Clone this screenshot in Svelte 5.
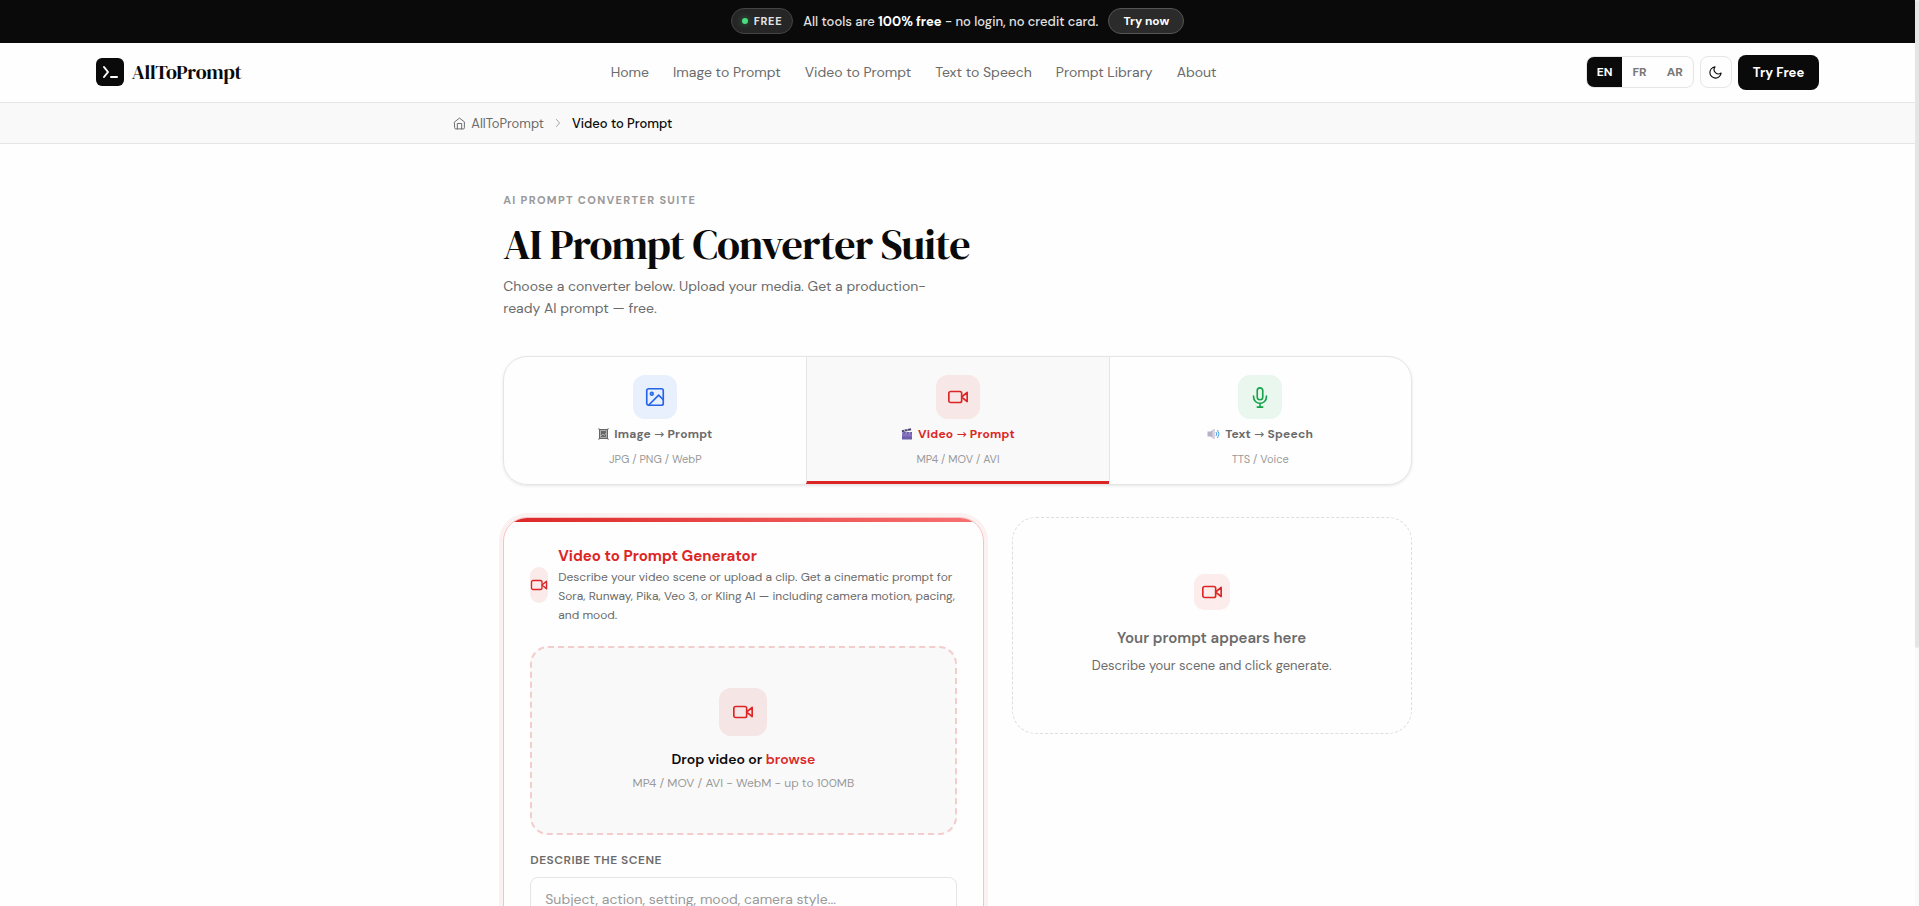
<script lang="ts">
	type Tab = { id: string; from: string; to: string; formats: string };

	const links = ['Home', 'Image to Prompt', 'Video to Prompt', 'Text to Speech', 'Prompt Library', 'About'];
	const languages = ['EN', 'FR', 'AR'];
	const tabs: Tab[] = [
		{ id: 'image', from: 'Image', to: 'Prompt', formats: 'JPG / PNG / WebP' },
		{ id: 'video', from: 'Video', to: 'Prompt', formats: 'MP4 / MOV / AVI' },
		{ id: 'speech', from: 'Text', to: 'Speech', formats: 'TTS / Voice' }
	];

	let language = $state('EN');
	let activeTab = $state('video');
	let scene = $state('');
	let fileInput: HTMLInputElement;

	let scrollTop = $state(0);
	let scrollHeight = $state(1266);
	let viewHeight = $state(906);
	let thumbHeight = $derived((viewHeight / scrollHeight) * 100);
	let thumbTop = $derived((scrollTop / scrollHeight) * 100);

	function onScroll(event: Event) {
		const el = event.currentTarget as HTMLElement;
		scrollTop = el.scrollTop;
	}
</script>

{#snippet videoIcon(size: number)}
	<svg class="icon" width={size} height={size} viewBox="0 0 24 24" aria-hidden="true">
		<rect x="2" y="6" width="14" height="12" rx="2" />
		<path d="M22 7l-6 5 6 5V7z" />
	</svg>
{/snippet}

<div class="page" bind:clientHeight={viewHeight} onscroll={onScroll}>
	<div class="content" bind:clientHeight={scrollHeight}>
		<div class="banner">
			<span class="free"><span class="dot"></span>FREE</span>
			<span>All tools are <strong>100% free</strong> - no login, no credit card.</span>
			<a class="try-now" href="#converter">Try now</a>
		</div>

		<header class="nav">
			<a class="logo" href="#home">
				<span class="logo-mark">
					<svg width="18" height="18" viewBox="0 0 18 18" aria-hidden="true">
						<path d="M3 4l4 5-4 5M10 14h6" />
					</svg>
				</span>
				AllToPrompt
			</a>
			<nav class="links">
				{#each links as link}
					<a href="#{link.toLowerCase().replaceAll(' ', '-')}">{link}</a>
				{/each}
			</nav>
			<div class="actions">
				<div class="languages">
					{#each languages as code}
						<button class:active={language === code} onclick={() => (language = code)}>{code}</button>
					{/each}
				</div>
				<button class="theme" aria-label="Toggle theme">
					<svg class="icon" width="15" height="15" viewBox="0 0 24 24" aria-hidden="true">
						<path d="M21 12.79A9 9 0 1 1 11.21 3 7 7 0 0 0 21 12.79z" />
					</svg>
				</button>
				<a class="try-free" href="#converter">Try Free</a>
			</div>
		</header>

		<div class="crumbs">
			<nav class="crumbs-inner" aria-label="Breadcrumb">
				<a href="#home">
					<svg class="icon" width="13" height="13" viewBox="0 0 24 24" aria-hidden="true">
						<path d="M3 9l9-7 9 7v11a2 2 0 0 1-2 2H5a2 2 0 0 1-2-2z" />
						<path d="M8 22V12h8v10" />
					</svg>
					AllToPrompt
				</a>
				<svg class="icon chevron" width="12" height="12" viewBox="0 0 24 24" aria-hidden="true">
					<path d="M9 5l6 7-6 7" />
				</svg>
				<span class="current">Video to Prompt</span>
			</nav>
		</div>

		<main id="converter">
			<p class="eyebrow">AI Prompt Converter Suite</p>
			<h1>AI Prompt Converter Suite</h1>
			<p class="intro">Choose a converter below. Upload your media. Get a production-ready AI prompt — free.</p>

			<div class="tabs" role="tablist">
				{#each tabs as tab}
					<button
						class="tab {tab.id}"
						class:active={activeTab === tab.id}
						role="tab"
						aria-selected={activeTab === tab.id}
						onclick={() => (activeTab = tab.id)}
					>
						<span class="tab-icon">
							{#if tab.id === 'image'}
								<svg class="icon" width="22" height="22" viewBox="0 0 24 24" aria-hidden="true">
									<rect x="3" y="3" width="18" height="18" rx="2" />
									<circle cx="8.5" cy="8.5" r="1.5" />
									<path d="M21 15l-5-5L5 21" />
								</svg>
							{:else if tab.id === 'video'}
								{@render videoIcon(22)}
							{:else}
								<svg class="icon" width="22" height="22" viewBox="0 0 24 24" aria-hidden="true">
									<path d="M12 2a3 3 0 0 0-3 3v7a3 3 0 0 0 6 0V5a3 3 0 0 0-3-3z" />
									<path d="M19 11v1a7 7 0 0 1-14 0v-1M12 19v4M9 23h6" />
								</svg>
							{/if}
						</span>
						<span class="tab-label">
							{#if tab.id === 'image'}
								<svg width="11" height="12" viewBox="0 0 11 12" aria-hidden="true">
									<path fill="#666" d="M0 0l2 1h7l2-1-1 2v8l1 2-2-1H2l-2 1 1-2V2z" />
									<path fill="none" stroke="#ccc" stroke-width=".7" d="M2.5 2.5h6v7h-6zM3 8l2-2 1.500 1.500L8 5" />
								</svg>
							{:else if tab.id === 'video'}
								<svg width="12" height="12" viewBox="0 0 12 12" aria-hidden="true">
									<path fill="#6b5fa8" d="M1 4h10v7.500H1z" />
									<path fill="#4a4470" d="M.8 2.200L9.800.3l.5 1.900L1 4.200z" />
									<path stroke="#d8d2ee" stroke-width=".9" d="M3 1.900l1 1.500M6 1.200l1 1.500M2 4.300L1.300 5.700M5.500 4.300l-.8 1.400M9 4.300l-.8 1.400" />
									<path fill="#8a6fc0" d="M1 6h10v2.500H1z" />
								</svg>
							{:else}
								<svg width="13" height="12" viewBox="0 0 13 12" aria-hidden="true">
									<path fill="#b9b2c6" d="M.5 3.500h3L7 1v10L3.500 8.500h-3z" />
									<path fill="#d9d4e2" d="M5.500 2L8 1v10l-2.500-1z" />
									<path fill="none" stroke="#4aa3e8" d="M9 4q1.500 2 0 4M10.500 2q3 4 0 8" />
								</svg>
							{/if}
							<span>{tab.from} <span class="arrow">→</span> {tab.to}</span>
						</span>
						<span class="tab-formats">{tab.formats}</span>
					</button>
				{/each}
			</div>

			<div class="workspace">
				<section class="card">
					<div class="card-head">
						<span class="head-icon">{@render videoIcon(18)}</span>
						<div>
							<h2>Video to Prompt Generator</h2>
							<p>
								Describe your video scene or upload a clip. Get a cinematic prompt for Sora, Runway, Pika, Veo 3, or
								Kling AI — including camera motion, pacing, and mood.
							</p>
						</div>
					</div>

					<button class="dropzone" onclick={() => fileInput.click()}>
						<span class="drop-icon">{@render videoIcon(22)}</span>
						<span class="drop-title">Drop video or <em>browse</em></span>
						<span class="drop-hint">MP4 / MOV / AVI - WebM - up to 100MB</span>
					</button>
					<input bind:this={fileInput} type="file" accept="video/*" aria-label="Video file" hidden />

					<label for="scene">Describe the scene</label>
					<textarea id="scene" rows="6" placeholder="Subject, action, setting, mood, camera style..." bind:value={scene}
					></textarea>
				</section>

				<section class="result">
					<span class="result-icon">{@render videoIcon(22)}</span>
					<h3>Your prompt appears here</h3>
					<p>Describe your scene and click generate.</p>
				</section>
			</div>
		</main>
	</div>
</div>

<div class="scrollbar" aria-hidden="true">
	<div class="thumb" style="top: {thumbTop}%; height: {thumbHeight}%"></div>
</div>

<style>
	:global(body) {
		background: #fefefe;
	}

	.page {
		--ink: #0a0a0a;
		--muted: #6b6b6b;
		--faint: #999;
		--line: #e5e5e5;
		--red: #dc2626;
		height: 100vh;
		padding-right: 4px;
		overflow-y: auto;
		scrollbar-width: none;
		font-family: 'DM Sans', Inter, 'Liberation Sans', sans-serif;
		font-size: 13px;
		color: var(--ink);
	}

	.page,
	.page * {
		box-sizing: border-box;
	}

	.scrollbar {
		position: fixed;
		inset: 0 0 0 auto;
		width: 4px;
		background: #fafafa;
	}

	.thumb {
		position: absolute;
		width: 100%;
		border-radius: 2px;
		background: #e5e5e5;
	}

	a {
		color: inherit;
		text-decoration: none;
	}

	button {
		font: inherit;
		color: inherit;
		border: 0;
		background: none;
		padding: 0;
		cursor: pointer;
	}

	h1,
	h2,
	h3,
	p {
		margin: 0;
	}

	.icon {
		fill: none;
		stroke: currentColor;
		stroke-width: 1.8;
		stroke-linecap: round;
		stroke-linejoin: round;
		flex: none;
	}

	.banner {
		display: flex;
		align-items: center;
		justify-content: center;
		gap: 10px;
		height: 43px;
		padding-bottom: 1px;
		background: var(--ink);
		color: #e2e2e2;
		font-size: 13px;
		font-weight: 500;
	}

	.banner strong {
		color: #fff;
		font-weight: 700;
	}

	.free,
	.try-now {
		display: flex;
		align-items: center;
		height: 26px;
		border: 1px solid #444;
		border-radius: 13px;
		background: #262626;
	}

	.free {
		gap: 6px;
		padding: 0 10px;
		font-size: 11px;
		font-weight: 700;
		letter-spacing: 0.06em;
	}

	.dot {
		width: 6px;
		height: 6px;
		border-radius: 50%;
		background: #4ade80;
		box-shadow: 0 0 6px #4ade8080;
	}

	.try-now {
		padding: 0 14px;
		border-color: #555;
		background: #2b2b2b;
		color: #fff;
		font-size: 12px;
		font-weight: 700;
	}

	.nav {
		display: flex;
		align-items: center;
		justify-content: space-between;
		height: 60px;
		padding: 0 5% 1px;
		border-bottom: 1px solid var(--line);
	}

	.logo {
		display: flex;
		align-items: center;
		gap: 8px;
		font: 400 20px 'DM Serif Display', 'Liberation Serif', serif;
		letter-spacing: -0.01em;
	}

	.logo-mark {
		display: grid;
		place-items: center;
		width: 28px;
		height: 28px;
		border-radius: 6px;
		background: var(--ink);
	}

	.logo-mark path {
		fill: none;
		stroke: #fff;
		stroke-width: 2;
		stroke-linecap: round;
		stroke-linejoin: round;
	}

	.links {
		display: flex;
		gap: 24px;
		font-size: 14px;
		color: var(--muted);
	}

	.actions {
		display: flex;
		align-items: center;
		gap: 6px;
	}

	.languages {
		display: flex;
		height: 32px;
		border: 1px solid var(--line);
		border-radius: 8px;
		overflow: hidden;
	}

	.languages button {
		padding: 0 10px;
		font-size: 12px;
		font-weight: 700;
		color: #777;
	}

	.languages button.active {
		background: var(--ink);
		color: #fff;
	}

	.theme {
		display: grid;
		place-items: center;
		width: 32px;
		height: 32px;
		border: 1px solid var(--line);
		border-radius: 8px;
	}

	.try-free {
		padding: 0 15px;
		border-radius: 8px;
		background: var(--ink);
		color: #fff;
		font-weight: 700;
		line-height: 35px;
	}

	.crumbs {
		background: #f9f9f9;
		border-bottom: 1px solid var(--line);
	}

	.crumbs-inner {
		display: flex;
		align-items: center;
		gap: 8px;
		max-width: 1200px;
		height: 40px;
		margin: 0 auto;
		padding: 0 5%;
		color: var(--muted);
	}

	.crumbs-inner a {
		display: flex;
		align-items: center;
		gap: 5px;
	}

	.chevron {
		color: var(--faint);
	}

	.current {
		color: var(--ink);
		font-weight: 500;
	}

	main {
		max-width: 1100px;
		margin: 0 auto;
		padding: 47px 5% 208px;
	}

	.eyebrow {
		font-size: 11px;
		font-weight: 700;
		line-height: 18px;
		letter-spacing: 0.12em;
		text-transform: uppercase;
		color: var(--faint);
	}

	h1 {
		margin-top: 11px;
		font: 400 42px/48px 'DM Serif Display', 'Liberation Serif', serif;
		letter-spacing: -0.02em;
	}

	.intro {
		max-width: 430px;
		margin-top: 7px;
		font-size: 14px;
		line-height: 22px;
		color: var(--muted);
	}

	.tabs {
		display: grid;
		grid-template-columns: repeat(3, 1fr);
		margin-top: 37px;
		border: 1px solid var(--line);
		border-radius: 24px;
		box-shadow: 0 1px 3px #0000001a;
		overflow: hidden;
	}

	.tab {
		display: flex;
		flex-direction: column;
		align-items: center;
		padding: 18px 16px 13px;
		border-bottom: 3px solid transparent;
		color: var(--muted);
	}

	.tab + .tab {
		border-left: 1px solid var(--line);
	}

	.tab.active {
		background: #f9f9f9;
		border-bottom-color: var(--red);
		color: var(--red);
	}

	.tab-icon {
		display: grid;
		place-items: center;
		width: 44px;
		height: 44px;
		border-radius: 12px;
	}

	.image .tab-icon {
		background: #e8effd;
		color: #2563eb;
	}

	.video .tab-icon {
		background: #f7e7e7;
		color: var(--red);
	}

	.speech .tab-icon {
		background: #eaf7ef;
		color: #16a34a;
	}

	.tab-label {
		display: flex;
		align-items: center;
		gap: 5px;
		margin-top: 5px;
		font-size: 12px;
		font-weight: 700;
		line-height: 20px;
		letter-spacing: 0.02em;
	}

	.arrow {
		font-family: 'DejaVu Sans', sans-serif;
		font-weight: 400;
		line-height: 1;
	}

	.tab-formats {
		margin-top: 6px;
		font-size: 11px;
		line-height: 18px;
		color: var(--faint);
	}

	.workspace {
		display: grid;
		grid-template-columns: 6fr 5fr;
		align-items: start;
		gap: 28px;
		margin-top: 32px;
	}

	.card {
		position: relative;
		padding: 26px;
		border: 1px solid #f4c4c4;
		border-radius: 24px;
		box-shadow: 0 0 0 4px #dc26260f;
		overflow: hidden;
	}

	.card::before {
		content: '';
		position: absolute;
		inset: 0 0 auto;
		height: 4px;
		background: linear-gradient(90deg, var(--red), #f87171);
	}

	.card-head {
		display: flex;
		align-items: center;
		gap: 10px;
	}

	.head-icon,
	.drop-icon,
	.result-icon {
		display: grid;
		place-items: center;
		flex: none;
		border-radius: 10px;
		background: #dc262618;
		color: var(--red);
	}

	.head-icon {
		width: 18px;
		height: 36px;
	}

	h2 {
		font-size: 15px;
		font-weight: 700;
		line-height: 24px;
		color: var(--red);
	}

	.card-head p {
		font-size: 12px;
		line-height: 19px;
		color: var(--muted);
	}

	.dropzone {
		display: flex;
		flex-direction: column;
		align-items: center;
		width: 100%;
		margin-top: 21px;
		padding: 40px 20px;
		border: 2px dashed #f3cccc;
		border-radius: 18px;
		background: #f9f9f9;
	}

	.drop-icon {
		width: 48px;
		height: 48px;
		border-radius: 12px;
	}

	.drop-title {
		margin-top: 12px;
		font-size: 14px;
		font-weight: 600;
		line-height: 22px;
	}

	.drop-title em {
		color: var(--red);
		font-style: normal;
	}

	.drop-hint {
		margin-top: 4px;
		font-size: 12px;
		line-height: 19px;
		color: var(--faint);
	}

	label {
		display: block;
		margin-top: 16px;
		font-size: 12px;
		font-weight: 600;
		line-height: 18px;
		letter-spacing: 0.04em;
		text-transform: uppercase;
		color: var(--muted);
	}

	textarea {
		display: block;
		width: 100%;
		margin-top: 8px;
		padding: 10px 14px;
		border: 1px solid var(--line);
		border-radius: 8px;
		background: #fefefe;
		font: inherit;
		font-size: 14px;
		line-height: 22px;
		resize: vertical;
	}

	textarea::placeholder {
		color: var(--faint);
	}

	.result {
		display: flex;
		flex-direction: column;
		align-items: center;
		padding: 56px 24px;
		border: 1px dashed #dedede;
		border-radius: 24px;
		color: var(--muted);
		text-align: center;
	}

	.result-icon {
		width: 36px;
		height: 36px;
		background: #fcecec;
	}

	h3 {
		margin-top: 16px;
		font-size: 15px;
		font-weight: 600;
		line-height: 24px;
	}

	.result p {
		margin-top: 5px;
		line-height: 22px;
	}
</style>
